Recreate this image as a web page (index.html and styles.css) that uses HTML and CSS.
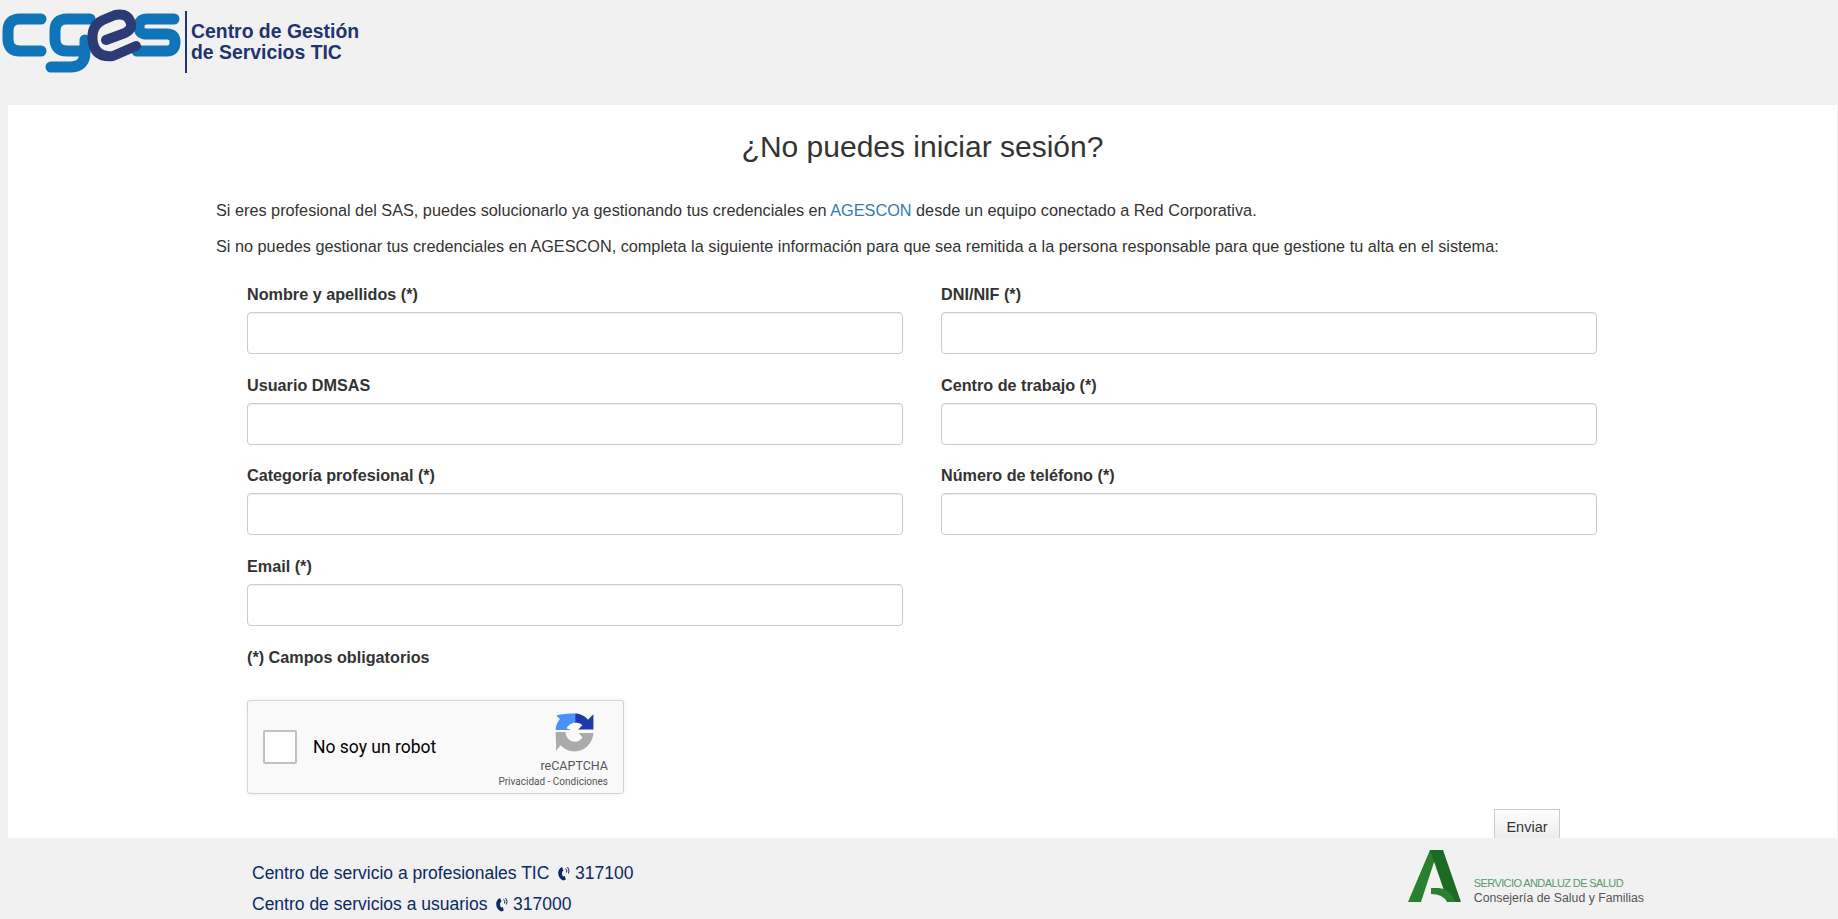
FILE: index.html
```html
<!DOCTYPE html>
<html lang="es">
<head>
<meta charset="utf-8">
<title>¿No puedes iniciar sesión?</title>
<link rel="stylesheet" href="styles.css">
</head>
<body>
<header class="top">
  <div class="brand">
    <svg class="brand-mark" width="185" height="80" viewBox="0 0 185 80" aria-hidden="true">
      <g fill="none" stroke="#0f75b8" stroke-width="11" stroke-linecap="round" stroke-linejoin="round">
        <path d="M41 19H20Q8 19 8 31V39Q8 51 20 51H41"/>
        <path d="M90 19H67Q55 19 55 31V39Q55 51 67 51H84"/>
        <path d="M85 40V52Q85 67 70 67H51"/>
        <path d="M174 19H147Q139 19 139 27Q139 34 147 34H167Q175 34 175 42Q175 51 167 51H137"/>
      </g>
      <path d="M106 40L125 33Q134 28 130 21Q127 13 115 15L103 20Q90 26 93 43Q96 58 113 56L136 46" fill="none" stroke="#2c3a75" stroke-width="10" stroke-linecap="round" stroke-linejoin="round"/>
    </svg>
    <span class="brand-rule"></span>
    <div class="brand-name">Centro de Gestión<br>de Servicios TIC</div>
  </div>
</header>
<main class="panel">
  <h1 class="title">¿No puedes iniciar sesión?</h1>
  <p class="intro">Si eres profesional del SAS, puedes solucionarlo ya gestionando tus credenciales en <a href="#" class="link">AGESCON</a> desde un equipo conectado a Red Corporativa.</p>
  <p class="intro">Si no puedes gestionar tus credenciales en AGESCON, completa la siguiente información para que sea remitida a la persona responsable para que gestione tu alta en el sistema:</p>
  <form class="form">
    <div class="fields">
      <div class="field"><label class="label">Nombre y apellidos (*)</label><input class="input" type="text"></div>
      <div class="field"><label class="label">DNI/NIF (*)</label><input class="input" type="text"></div>
      <div class="field"><label class="label">Usuario DMSAS</label><input class="input" type="text"></div>
      <div class="field"><label class="label">Centro de trabajo (*)</label><input class="input" type="text"></div>
      <div class="field"><label class="label">Categoría profesional (*)</label><input class="input" type="text"></div>
      <div class="field"><label class="label">Número de teléfono (*)</label><input class="input" type="text"></div>
      <div class="field"><label class="label">Email (*)</label><input class="input" type="text"></div>
    </div>
    <div class="required">(*) Campos obligatorios</div>
    <div class="captcha">
      <span class="captcha-box"></span>
      <span class="captcha-text">No soy un robot</span>
      <div class="captcha-brand">
        <svg class="captcha-icon" width="39" height="39" viewBox="0 0 64 64" aria-hidden="true">
          <path fill="#1c3aa9" d="M33 1C41 1 49 5 54 11L63 2V27H38L45 20C42 17 38 16 33 16Z"/>
          <path fill="#4a90f5" d="M33 1V16C27 16 22 20 19 25L26 28H1C1 21 4 15 8 10L2 4C10 2 22 1 33 1Z"/>
          <path fill="#ababab" d="M1 31H17C18 40 24 47 33 47C38 47 42 44 45 40L39 33H63C62 50 49 63 32 63C23 63 15 59 9 53L2 62Z"/>
        </svg>
        <span class="captcha-name">reCAPTCHA</span>
        <span class="captcha-links">Privacidad - Condiciones</span>
      </div>
    </div>
    <div class="actions"><button class="send" type="button">Enviar</button></div>
  </form>
</main>
<footer class="bottom">
  <div class="contacts">
    <div class="contact">Centro de servicio a profesionales TIC
      <svg class="phone" width="12" height="15" viewBox="0 0 12 15" aria-hidden="true"><path fill="#0b2a66" d="M4 1L5.500 4.500L4 6C4 8 4.300 9.500 5 10.500L6.800 10L7.800 13.500L5.500 14.500C2 13.500 .2 10 .2 7C.2 4.500 1.500 2 4 1Z"/><path fill="none" stroke="#0b2a66" stroke-width="1" d="M7.500 2.500Q9.500 4 8.500 6.500M9.500 1Q12 4 10.500 7.500"/></svg>
      317100</div>
    <div class="contact">Centro de servicios a usuarios
      <svg class="phone" width="12" height="15" viewBox="0 0 12 15" aria-hidden="true"><path fill="#0b2a66" d="M4 1L5.500 4.500L4 6C4 8 4.300 9.500 5 10.500L6.800 10L7.800 13.500L5.500 14.500C2 13.500 .2 10 .2 7C.2 4.500 1.500 2 4 1Z"/><path fill="none" stroke="#0b2a66" stroke-width="1" d="M7.500 2.500Q9.500 4 8.500 6.500M9.500 1Q12 4 10.500 7.500"/></svg>
      317000</div>
  </div>
  <div class="sas">
    <svg class="sas-mark" width="54" height="53" viewBox="0 0 54 53" aria-hidden="true">
      <path fill="#2a7f31" d="M22 0H30L13 52H0Z"/>
      <path fill="#1b6b22" d="M22 0H35L53 52H40Z"/>
      <path fill="#2a7f31" d="M23 38H31Q41 38 48 52H39Q35 44 23 44Z"/>
    </svg>
    <div class="sas-text">
      <div class="sas-top">SERVICIO ANDALUZ DE SALUD</div>
      <div class="sas-sub">Consejería de Salud y Familias</div>
    </div>
  </div>
</footer>
</body>
</html>
```

FILE: styles.css
```css
html, body { margin: 0; padding: 0; }
body {
  background: #f1f1f1;
  font-family: "Liberation Sans", Arial, sans-serif;
  color: #333;
  height: 919px;
  overflow: hidden;
}
.top { height: 105px; box-sizing: border-box; }
.brand { display: flex; align-items: flex-start; }
.brand-mark { flex: none; }
.brand-rule { width: 2px; height: 62px; margin-top: 11px; background: #1f3470; flex: none; }
.brand-name {
  margin: 21px 0 0 4px;
  font-size: 19.4px;
  line-height: 21px;
  font-weight: 700;
  color: #1f3470;
}
.panel {
  margin: 0 1px 0 8px;
  height: 733px;
  background: #fff;
  overflow: hidden;
  padding: 0 208px;
  box-sizing: border-box;
}
.title {
  margin: 0;
  padding-top: 22px;
  height: 94px;
  box-sizing: border-box;
  text-align: center;
  font-size: 30px;
  line-height: 40px;
  font-weight: 400;
  color: #333;
}
.intro { margin: 0 0 14px; font-size: 16.25px; line-height: 22px; color: #333; white-space: nowrap; }
.link { color: #337ab7; text-decoration: none; }
.form { padding: 0 31px; margin-top: 26px; }
.fields {
  display: grid;
  grid-template-columns: 656px 656px;
  column-gap: 38px;
  row-gap: 19.67px;
}
.field { display: flex; flex-direction: column; }
.label { font-size: 16.2px; line-height: 22px; font-weight: 700; margin-bottom: 7px; }
.input {
  height: 42px;
  box-sizing: border-box;
  border: 1px solid #ccc;
  border-radius: 4px;
  background: #fff;
  box-shadow: inset 0 1px 1px rgba(0,0,0,.075);
  padding: 6px 12px;
}
.required { margin-top: 19.67px; font-size: 16.2px; line-height: 22px; font-weight: 700; }
.captcha {
  margin-top: 32.5px;
  width: 377px;
  height: 94px;
  box-sizing: border-box;
  border: 1px solid #d3d3d3;
  border-radius: 3px;
  background: #f9f9f9;
  box-shadow: 0 0 4px rgba(0,0,0,.08);
  display: flex;
  align-items: center;
  padding: 0 15px;
  font-family: Roboto, "Liberation Sans", sans-serif;
}
.captcha-box {
  width: 34px;
  height: 34px;
  box-sizing: border-box;
  border: 2px solid #c1c1c1;
  border-radius: 2px;
  background: #fff;
  flex: none;
}
.captcha-text { margin-left: 16px; font-size: 17.5px; color: #000; flex: 1; }
.captcha-brand { display: flex; flex-direction: column; align-items: flex-end; align-self: flex-start; margin-top: 12px; }
.captcha-icon { margin-right: 14px; }
.captcha-name { font-size: 12.5px; line-height: 15px; color: #555; margin-top: 6px; }
.captcha-links { font-size: 10px; line-height: 14px; color: #555; margin-top: 2px; }
.actions { display: flex; justify-content: flex-end; margin-top: 15px; margin-right: 38px; }
.send {
  width: 66px;
  height: 36px;
  border: 1px solid #ccc;
  border-radius: 0;
  background: linear-gradient(#fff, #e8e8e8);
  font-family: "Liberation Sans", Arial, sans-serif;
  font-size: 14.5px;
  color: #333;
  padding: 0;
}
.bottom {
  display: flex;
  justify-content: space-between;
  padding: 20px 0 0 252px;
  height: 81px;
  box-sizing: border-box;
}
.contact { font-size: 17.5px; line-height: 31px; color: #0b2a66; white-space: nowrap; }
.phone { vertical-align: -2px; margin: 0 0 0 4px; }
.sas { display: flex; align-items: flex-end; margin: -8px 194px 0 0; height: 53px; }
.sas-mark { flex: none; }
.sas-text { margin: 0 0 -3px 12px; }
.sas-top { font-size: 11px; line-height: 15px; color: #5a9a6a; letter-spacing: -.6px; }
.sas-sub { font-size: 12.3px; line-height: 15px; color: #555; }
```
